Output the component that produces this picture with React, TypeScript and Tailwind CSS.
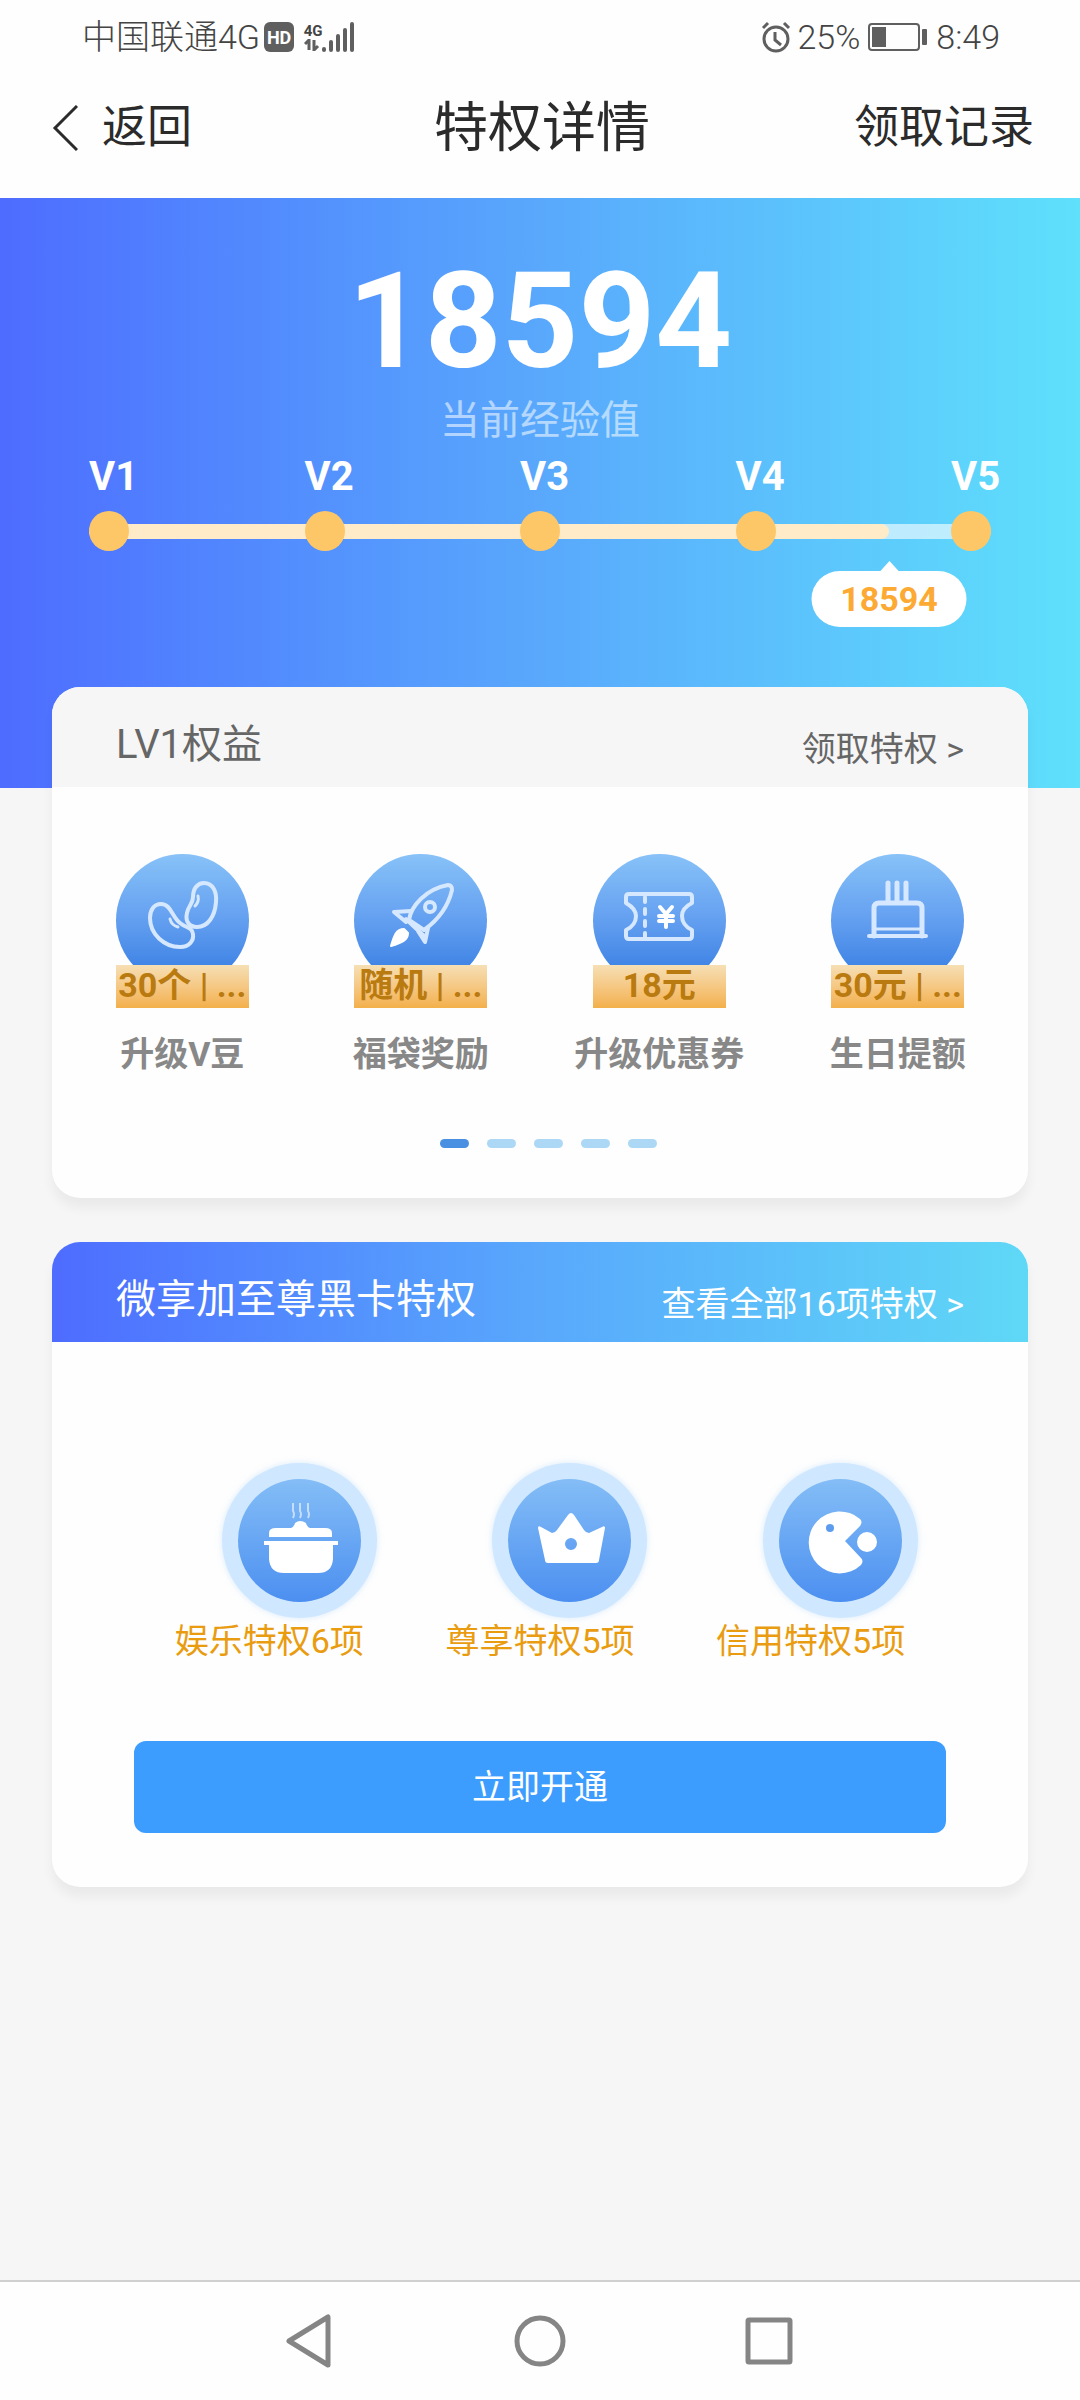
import type { ReactNode } from 'react';

const levels = ['V1', 'V2', 'V3', 'V4', 'V5'];
const experience = 18594;
const progress = 88.7;

const rights = [
  { name: '升级V豆', tag: '30个 | ...', icon: <BeanIcon /> },
  { name: '福袋奖励', tag: '随机 | ...', icon: <RocketIcon /> },
  { name: '升级优惠券', tag: '18元', icon: <CouponIcon /> },
  { name: '生日提额', tag: '30元 | ...', icon: <CakeIcon /> },
];

const blackCard = [
  { name: '娱乐特权6项', icon: <PotIcon /> },
  { name: '尊享特权5项', icon: <CrownIcon /> },
  { name: '信用特权5项', icon: <PacmanIcon /> },
];

function LineIcon({ children }: { children: ReactNode }) {
  return (
    <svg
      viewBox="0 0 133 133"
      className="w-full"
      fill="none"
      stroke="#d6e8ff"
      strokeWidth="4"
      strokeLinecap="round"
      strokeLinejoin="round"
      aria-hidden="true"
    >
      {children}
    </svg>
  );
}

function BeanIcon() {
  return (
    <LineIcon>
      <path d="M77 43C77 34 82 29 88 29C97 29 101 38 100 48C99 62 92 73 81 73C73 73 69 67 71 59C72 52 77 50 77 43Z" />
      <path d="M45 50C38 50 34 56 34 64C34 80 48 93 64 93C73 93 78 87 77 80C76 73 70 74 64 69C56 63 55 50 45 50Z" />
      <path d="M82 42C83 46 82 49 79 52M54 65C55 69 58 72 62 73" strokeWidth="3" />
    </LineIcon>
  );
}

function RocketIcon() {
  return (
    <LineIcon>
      <path d="M55 66C57 52 72 35 94 31C97 31 98 33 98 36C94 53 84 66 70 76Z" />
      <path d="M57 57L40 58L52 68M52 65L70 82M74 74L71 88L64 77" />
      <circle cx="76" cy="53" r="5" />
      <path d="M50 75C42 75 40 82 37 92C48 89 54 86 54 79Z" fill="#fff" stroke="#fff" strokeWidth="2" />
    </LineIcon>
  );
}

function CouponIcon() {
  return (
    <LineIcon>
      <path d="M36 40H96Q99 40 99 43V49C91 53 89 58 89 62C89 67 92 73 99 76V82Q99 85 96 85H36Q33 85 33 82V76C40 73 43 67 43 62C43 58 40 53 33 49V43Q33 40 36 40Z" />
      <path d="M52 43V83" strokeDasharray="5 7" />
      <path d="M67 53L73 60L79 53M73 60V73M66 62H80M66 67H80" stroke="#fff" />
    </LineIcon>
  );
}

function CakeIcon() {
  return (
    <LineIcon>
      <path d="M57 29V47M66 29V47M75 29V47" strokeWidth="5" />
      <path d="M43 82V54Q43 49 48 49H86Q91 49 91 54V82" strokeWidth="5" />
      <path d="M44 75H90" strokeWidth="3" />
      <path d="M38 82H95" />
    </LineIcon>
  );
}

function PotIcon() {
  return (
    <svg viewBox="0 0 123 123" className="w-full" fill="#fff" aria-hidden="true">
      <path
        d="M55 24V32Q57 35 55 39M62 24V32Q64 35 62 39M70 24V32Q72 35 70 39"
        fill="none"
        stroke="#c5defc"
        strokeWidth="2"
      />
      <path d="M31 58V54Q31 49 38 49H53Q56 48 57 44Q62 40 68 44Q69 48 72 49H87Q94 49 94 54V58Z" />
      <path d="M26 62H100V66H95V80Q94 94 80 94H46Q32 94 31 80V66H26Z" />
    </svg>
  );
}

function CrownIcon() {
  return (
    <svg viewBox="0 0 123 123" className="w-full" fill="#fff" aria-hidden="true">
      <path
        fillRule="evenodd"
        d="M30 49Q30 46 33 48L44 54Q47 54 49 51L60 36Q63 32 66 36L76 51Q78 54 81 54L94 48Q97 46 97 49L91 81Q91 84 88 84H40Q37 84 37 81ZM63 59A6 6 0 1 0 63 71A6 6 0 1 0 63 59Z"
      />
    </svg>
  );
}

function PacmanIcon() {
  return (
    <svg viewBox="0 0 123 123" className="w-full" fill="#fff" aria-hidden="true">
      <path d="M66 62L81 47Q84 43 81 40A31 31 0 1 0 82 86Q85 82 82 79Z" />
      <circle cx="51" cy="49" r="4" fill="#5c9bee" />
      <circle cx="88" cy="63" r="10" />
    </svg>
  );
}

function StatusBar() {
  return (
    <div className="flex h-[74px] items-center justify-between pr-20 pl-[82px] text-[34px] font-light text-[#444]">
      <div className="flex items-center">
        <span>中国联通4G</span>
        <span className="ml-1 flex h-[30px] w-[30px] items-center justify-center rounded-md bg-[#5f5f5f] text-[18px] font-bold text-white">
          HD
        </span>
        <span className="ml-2.5 flex w-[18px] flex-col items-center">
          <span className="text-[15px] leading-4 font-bold">4G</span>
          <svg viewBox="0 0 18 12" className="h-3 w-[18px]" fill="none" stroke="#5f5f5f" strokeWidth="3" aria-hidden="true">
            <path d="M1 5L5 1V11M10 1V11L14 7" />
          </svg>
        </span>
        <svg viewBox="0 0 34 32" className="h-8 w-[34px]" fill="none" stroke="#5f5f5f" strokeWidth="4" strokeLinecap="round" aria-hidden="true">
          <path d="M2 28V29M9 21V29M16 15V29M23 9V29M30 3V29" />
        </svg>
      </div>
      <div className="flex items-center">
        <svg viewBox="0 0 30 32" className="mr-1.5 h-8 w-[30px]" fill="none" stroke="#5f5f5f" strokeWidth="3" aria-hidden="true">
          <circle cx="15" cy="18" r="12" />
          <path d="M14 11V19L20 24M2 7L7 2M23 2L28 7" />
        </svg>
        <span>25%</span>
        <svg viewBox="0 0 60 28" className="mx-2 h-7 w-[60px]" aria-hidden="true">
          <rect x="1" y="1" width="50" height="26" rx="3" fill="none" stroke="#5f5f5f" strokeWidth="2" />
          <rect x="4" y="4" width="14" height="20" fill="#5f5f5f" />
          <rect x="54" y="6" width="5" height="16" rx="1" fill="#5f5f5f" />
        </svg>
        <span>8:49</span>
      </div>
    </div>
  );
}

function TitleBar() {
  return (
    <header className="flex h-[124px] items-center justify-between pr-[46px] pb-[16px] pl-[50px] text-[45px] text-[#2b2b2b]">
      <button type="button" className="flex flex-1 items-center gap-6">
        <svg viewBox="0 0 28 46" className="h-[46px] w-7" fill="none" stroke="#2b2b2b" strokeWidth="3" aria-hidden="true">
          <path d="M27 1L5 23L27 45" />
        </svg>
        返回
      </button>
      <h1 className="text-[54px]">特权详情</h1>
      <a href="#records" className="flex-1 text-right">
        领取记录
      </a>
    </header>
  );
}

function LevelTrack() {
  return (
    <div className="mx-[89px]">
      <ol className="flex justify-between text-[40px] leading-[48px] font-bold">
        {levels.map((level) => (
          <li key={level} className="w-10 whitespace-nowrap">
            {level}
          </li>
        ))}
      </ol>
      <div className="relative mt-[10px] flex h-10 items-center justify-between">
        <div className="absolute inset-x-0 h-[15px] rounded-full bg-white/60">
          <div className="h-full rounded-full bg-[#ffebc8]" style={{ width: `${progress}%` }} />
        </div>
        {levels.map((level) => (
          <span key={level} className="relative h-10 w-10 rounded-full bg-[#fdc768]" />
        ))}
        {/* Current value bubble under the track */}
        <div
          className="absolute top-[60px] flex h-14 w-[155px] -translate-x-1/2 items-center justify-center rounded-full bg-white text-[34px] font-bold text-[#fcaa33]"
          style={{ left: `${progress}%` }}
        >
          <span className="absolute -top-2.5 border-x-[10px] border-b-[11px] border-x-transparent border-b-white" />
          {experience}
        </div>
      </div>
    </div>
  );
}

export default function App() {
  return (
    <div className="flex min-h-screen flex-col bg-[#f6f6f6] font-[Roboto,'Noto_Sans_CJK_SC',sans-serif]">
      <div className="bg-[#fefefe]">
        <StatusBar />
        <TitleBar />
      </div>

      <section className="h-[590px] bg-linear-to-r from-[#4e6cff] via-[#59a8fc] to-[#5fe0fb] pt-[53px] text-white">
        <p className="text-center text-[134px] leading-[142px] font-bold">{experience}</p>
        <p className="mt-0.5 mb-1.5 text-center text-[40px] leading-[52px] text-white/55">当前经验值</p>
        <LevelTrack />
      </section>

      <main className="-mt-[101px] flex flex-col gap-11 px-[52px]">
        <section className="overflow-hidden rounded-[28px] bg-[#fefefe] shadow-[0_10px_12px_rgba(0,0,0,0.05)]">
          <div className="flex h-[100px] items-end justify-between bg-[#f6f6f6] px-16 pb-3 leading-[52px] text-[#666]">
            <h2 className="pb-1 text-[40px]">LV1权益</h2>
            <a href="#claim" className="text-[34px]">
              领取特权 &gt;
            </a>
          </div>
          <ul className="grid grid-cols-4 px-[11px] pt-[67px]">
            {rights.map((item) => (
              <li key={item.name} className="flex flex-col items-center">
                <div className="w-[133px]">
                  <div className="h-[111px] overflow-hidden">
                    <div className="h-[133px] rounded-full bg-linear-to-b from-[#88c2f8] via-[#639ff0] to-[#2f78e0]">
                      {item.icon}
                    </div>
                  </div>
                  <div className="h-[43px] bg-linear-to-b from-[#f6dfb4] to-[#f3b04a] text-center text-[34px] leading-10 font-bold whitespace-nowrap text-[#b97a10]">
                    {item.tag}
                  </div>
                </div>
                <p className="mt-[22px] text-[34px] leading-[48px] font-bold text-[#888]">{item.name}</p>
              </li>
            ))}
          </ul>
          <div className="mt-[61px] flex justify-center gap-[18px] pb-[50px] pl-[17px]">
            <span className="h-[9px] w-[29px] rounded-full bg-[#4a90e2]" />
            <span className="h-[9px] w-[29px] rounded-full bg-[#acd8f6]" />
            <span className="h-[9px] w-[29px] rounded-full bg-[#acd8f6]" />
            <span className="h-[9px] w-[29px] rounded-full bg-[#acd8f6]" />
            <span className="h-[9px] w-[29px] rounded-full bg-[#acd8f6]" />
          </div>
        </section>

        <section className="overflow-hidden rounded-[28px] bg-[#fefefe] shadow-[0_10px_12px_rgba(0,0,0,0.05)]">
          <div className="flex h-[100px] items-end justify-between bg-linear-to-r from-[#4e6cff] via-[#59a8fc] to-[#5fd8f6] px-16 pb-3 leading-[52px] text-white">
            <h2 className="pb-1 text-[40px]">微享加至尊黑卡特权</h2>
            <a href="#all" className="text-[34px]">
              查看全部16项特权 &gt;
            </a>
          </div>
          <div className="px-[82px] pt-[121px] pb-[54px]">
            <ul className="grid grid-cols-3">
              {blackCard.map((item) => (
                <li key={item.name} className="flex flex-col items-center">
                  <div className="ml-[60px] rounded-full bg-[#cfe8ff] p-4 shadow-[0_0_6px_rgba(180,215,250,0.5)]">
                    <div className="h-[123px] w-[123px] rounded-full bg-linear-to-b from-[#84bdf6] to-[#4c8ff0]">
                      {item.icon}
                    </div>
                  </div>
                  <p className="text-[34px] leading-[46px] text-[#e99c10]">{item.name}</p>
                </li>
              ))}
            </ul>
            <button type="button" className="mt-[77px] h-[92px] w-full rounded-xl bg-[#3d9dff] text-[34px] text-white">
              立即开通
            </button>
          </div>
        </section>
      </main>

      <nav className="mt-auto flex h-[120px] items-center justify-center gap-[170px] border-t-2 border-[#d0d0d0] bg-[#fefefe]">
        <button type="button" aria-label="Back">
          <svg viewBox="0 0 60 60" className="h-[60px] w-[60px]" fill="none" stroke="#858585" strokeWidth="5" strokeLinejoin="round">
            <path d="M48 6V54L9 30Z" />
          </svg>
        </button>
        <button type="button" aria-label="Home">
          <svg viewBox="0 0 60 60" className="h-[60px] w-[60px]" fill="none" stroke="#858585" strokeWidth="5">
            <circle cx="30" cy="30" r="23" />
          </svg>
        </button>
        <button type="button" aria-label="Recent apps">
          <svg viewBox="0 0 60 60" className="h-[60px] w-[60px]" fill="none" stroke="#858585" strokeWidth="5">
            <rect x="8" y="9" width="42" height="42" rx="1" />
          </svg>
        </button>
      </nav>
    </div>
  );
}
